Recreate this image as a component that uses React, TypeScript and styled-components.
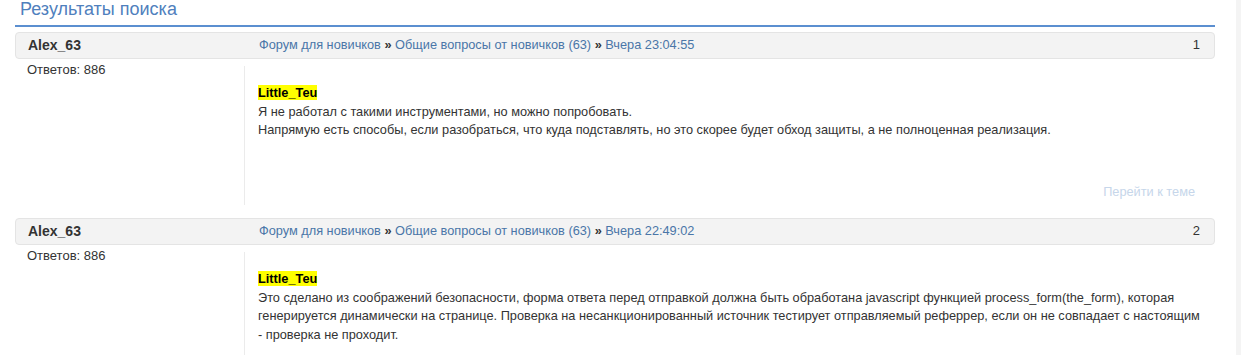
import React from "react";
import styled, { createGlobalStyle } from "styled-components";

const GlobalStyle = createGlobalStyle`
  html, body {
    margin: 0;
    padding: 0;
    background: #ffffff;
  }
  body {
    font-family: "Liberation Sans", Arial, sans-serif;
    font-size: 12.75px;
    line-height: 18.57px;
    color: #333333;
  }
`;

const Layout = styled.div`
  display: flex;
  width: 1241px;
  height: 355px;
  overflow: hidden;
`;

const Main = styled.main`
  flex: 1;
  padding: 0 21px 0 15px;
  min-width: 0;
`;

const Sidebar = styled.aside`
  width: 5px;
  flex: none;
  background: #f4f4f4;
`;

const Title = styled.h1`
  margin: -1px 0 5px;
  padding: 0 0 6px 5px;
  font-size: 18px;
  font-weight: normal;
  line-height: 20px;
  color: #4f80bd;
  border-bottom: 2px solid #5b8fd0;
`;

const Post = styled.section`
  margin-bottom: 13px;
`;

const PostHead = styled.header`
  display: grid;
  grid-template-columns: 231px 1fr auto;
  align-items: center;
  height: 25px;
  padding: 0 14px 0 12px;
  background: #f3f3f3;
  border: 1px solid #e4e4e4;
  border-radius: 4px;
`;

const Author = styled.span`
  font-size: 14px;
  font-weight: bold;
  color: #333333;
`;

const Crumbs = styled.div`
  color: #333333;
  white-space: nowrap;
`;

const Crumb = styled.a`
  color: #4a76a8;
  text-decoration: none;
`;

const Sep = styled.b`
  color: #333333;
`;

const Num = styled.span`
  font-size: 13px;
  color: #333333;
`;

const PostBody = styled.div`
  display: grid;
  grid-template-columns: 229px 1fr;
`;

const UserInfo = styled.div`
  padding: 2px 0 0 12px;
  font-size: 13px;
`;

const Content = styled.div`
  margin-top: 7px;
  padding: 18px 10px 4px 13px;
  border-left: 1px solid #ebebeb;
`;

const Quote = styled.mark`
  background: #ffff00;
  color: #000000;
  font-weight: bold;
`;

const Text = styled.div``;

const GoTopic = styled.div`
  margin-top: 43px;
  margin-right: 10px;
  text-align: right;
`;

const GoLink = styled.a`
  color: #c6d6ea;
  text-decoration: none;
`;

type PostData = {
  n: number;
  time: string;
  lines: string[];
};

const posts: PostData[] = [
  {
    n: 1,
    time: "Вчера 23:04:55",
    lines: [
      "Я не работал с такими инструментами, но можно попробовать.",
      "Напрямую есть способы, если разобраться, что куда подставлять, но это скорее будет обход защиты, а не полноценная реализация.",
    ],
  },
  {
    n: 2,
    time: "Вчера 22:49:02",
    lines: [
      "Это сделано из соображений безопасности, форма ответа перед отправкой должна быть обработана javascript функцией process_form(the_form), которая генерируется динамически на странице. Проверка на несанкционированный источник тестирует отправляемый реферрер, если он не совпадает с настоящим - проверка не проходит.",
    ],
  },
];

export default function App() {
  return (
    <>
      <GlobalStyle />
      <Layout>
        <Main>
          <Title>Результаты поиска</Title>
          {posts.map((p) => (
            <Post key={p.n}>
              <PostHead>
                <Author>Alex_63</Author>
                <Crumbs>
                  <Crumb href="#">Форум для новичков</Crumb> <Sep>»</Sep>{" "}
                  <Crumb href="#">Общие вопросы от новичков (63)</Crumb> <Sep>»</Sep>{" "}
                  <Crumb href="#">{p.time}</Crumb>
                </Crumbs>
                <Num>{p.n}</Num>
              </PostHead>
              <PostBody>
                <UserInfo>Ответов: 886</UserInfo>
                <Content>
                  <Quote>Little_Teu</Quote>
                  {p.lines.map((l, i) => (
                    <Text key={i}>{l}</Text>
                  ))}
                  <GoTopic>
                    <GoLink href="#">Перейти к теме</GoLink>
                  </GoTopic>
                </Content>
              </PostBody>
            </Post>
          ))}
        </Main>
        <Sidebar />
      </Layout>
    </>
  );
}
